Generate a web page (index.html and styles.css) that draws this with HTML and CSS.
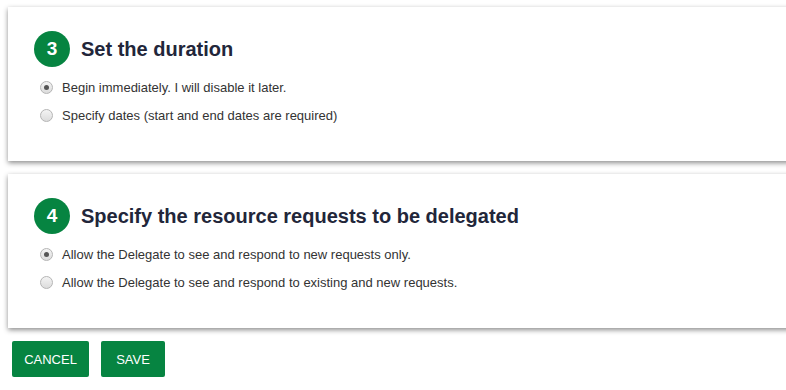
FILE: index.html
```html
<!DOCTYPE html>
<html>
<head>
<meta charset="utf-8">
<link rel="stylesheet" href="styles.css">
</head>
<body>
<div class="page">
  <section class="card">
    <div class="step-head">
      <span class="badge">3</span>
      <h2 class="step-title">Set the duration</h2>
    </div>
    <label class="option"><span class="radio checked"></span>Begin immediately. I will disable it later.</label>
    <label class="option"><span class="radio"></span>Specify dates (start and end dates are required)</label>
  </section>
  <section class="card">
    <div class="step-head">
      <span class="badge">4</span>
      <h2 class="step-title">Specify the resource requests to be delegated</h2>
    </div>
    <label class="option"><span class="radio checked"></span>Allow the Delegate to see and respond to new requests only.</label>
    <label class="option"><span class="radio"></span>Allow the Delegate to see and respond to existing and new requests.</label>
  </section>
  <div class="actions">
    <button class="btn btn-cancel">CANCEL</button>
    <button class="btn btn-save">SAVE</button>
  </div>
</div>
</body>
</html>
```
FILE: styles.css
```css
html, body {
  margin: 0;
  padding: 0;
  overflow: hidden;
  background: #ffffff;
  font-family: "Liberation Sans", Arial, sans-serif;
}
.page {
  width: 820px;
  padding: 7px 0 0 8px;
}
.card {
  background: #fff;
  box-shadow: 0 2px 5px rgba(0, 0, 0, 0.45);
  padding: 24px 0 32px 26px;
  margin-bottom: 13px;
}
.step-head {
  display: flex;
  align-items: center;
  height: 36px;
  margin-bottom: 6px;
}
.badge {
  width: 36px;
  height: 36px;
  border-radius: 50%;
  background: #068441;
  color: #fff;
  font-weight: bold;
  font-size: 19px;
  display: flex;
  align-items: center;
  justify-content: center;
  margin-right: 11px;
}
.step-title {
  margin: 0;
  font-size: 20px;
  font-weight: bold;
  color: #22263a;
}
.option {
  display: flex;
  align-items: center;
  height: 28px;
  padding-left: 6px;
  font-size: 13px;
  color: #333;
}
.radio {
  width: 11px;
  height: 11px;
  border-radius: 50%;
  border: 1px solid #b5b5b5;
  background: linear-gradient(#f4f4f4, #dcdcdc);
  margin-right: 9px;
  display: flex;
  align-items: center;
  justify-content: center;
  box-sizing: content-box;
}
.radio.checked::after {
  content: "";
  width: 5px;
  height: 5px;
  border-radius: 50%;
  background: #555;
}
.actions {
  display: flex;
  gap: 12px;
  padding-left: 4px;
  margin-top: 2px;
}
.btn {
  height: 36px;
  border: none;
  border-radius: 2px;
  background: #068441;
  color: #fff;
  font-family: "Liberation Sans", Arial, sans-serif;
  font-size: 13px;
  padding: 0;
}
.btn-cancel { width: 77px; }
.btn-save { width: 64px; }
```
